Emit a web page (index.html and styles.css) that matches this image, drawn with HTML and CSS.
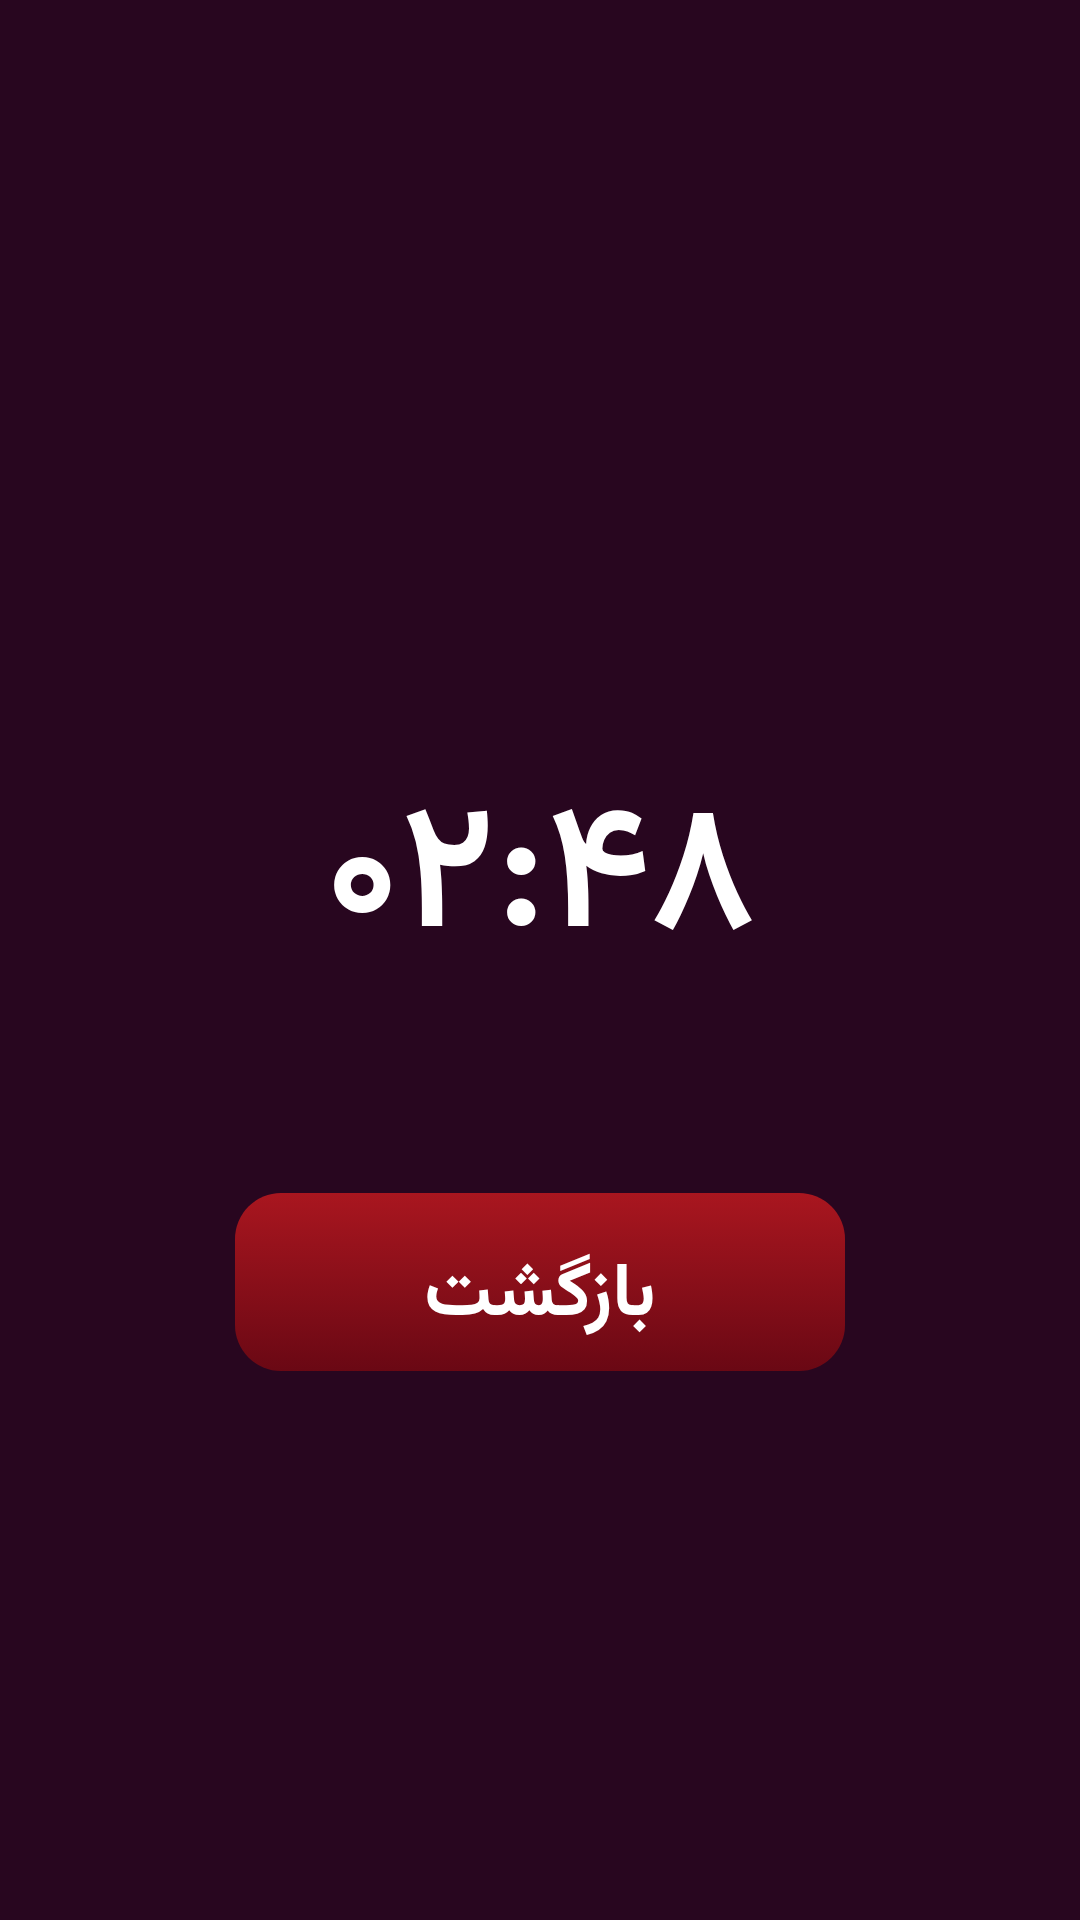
FILE: index.html
```html
<!DOCTYPE html>
<html lang="fa" dir="rtl">
<head>
<meta charset="utf-8">
<link rel="stylesheet" href="styles.css">
</head>
<body>
<main class="screen">
  <div class="timer" dir="ltr">۰۲:۴۸</div>
  <button class="back-btn">بازگشت</button>
</main>
</body>
</html>
```
FILE: styles.css
```css
html, body {
  margin: 0;
  padding: 0;
  background: #28061f;
}
.screen {
  width: 1080px;
  height: 1920px;
  display: flex;
  flex-direction: column;
  align-items: center;
  padding-top: 784px;
  box-sizing: border-box;
  font-family: "Vazirmatn", "Vazir", "DejaVu Sans", sans-serif;
}
.timer {
  height: 200px;
  line-height: 200px;
  font-size: 176px;
  font-weight: 600;
  letter-spacing: -1px;
  color: #ffffff;
}
.back-btn {
  margin-top: 209px;
  width: 610px;
  height: 178px;
  padding: 28px 0 0;
  border: none;
  border-radius: 46px;
  background: linear-gradient(to bottom, #a9161f, #6a0814);
  color: #ffffff;
  font-family: "Vazirmatn", "Vazir", "DejaVu Sans", sans-serif;
  font-weight: bold;
  font-size: 75px;
}
```
